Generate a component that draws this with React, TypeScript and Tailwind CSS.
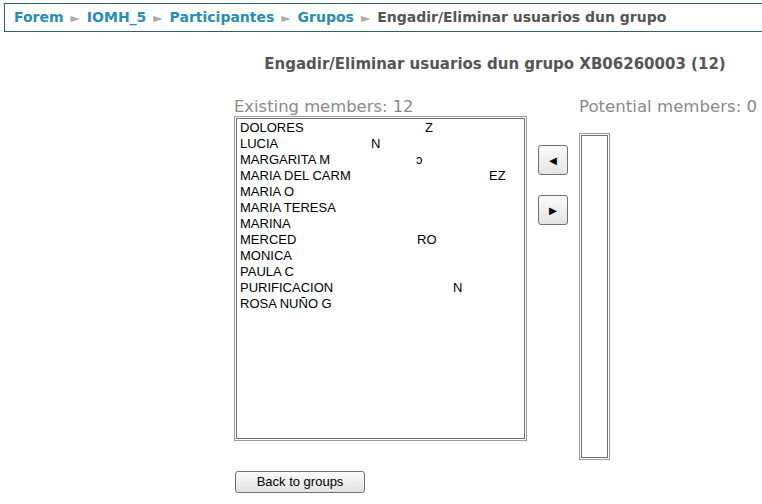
import React from "react";

const members: { name: string; suffix?: string; w?: string }[] = [
  { name: "DOLORES", suffix: "Z", w: "w-[185px]" },
  { name: "LUCIA", suffix: "N", w: "w-[131px]" },
  { name: "MARGARITA M", suffix: "ↄ", w: "w-[176px]" },
  { name: "MARIA DEL CARM", suffix: "EZ", w: "w-[249px]" },
  { name: "MARIA O" },
  { name: "MARIA TERESA" },
  { name: "MARINA" },
  { name: "MERCED", suffix: "RO", w: "w-[177px]" },
  { name: "MONICA" },
  { name: "PAULA C" },
  { name: "PURIFICACION", suffix: "N", w: "w-[213px]" },
  { name: "ROSA NUÑO G" },
];

function Crumb({ children }: { children: React.ReactNode }) {
  return <span className="text-[#2a8db3]">{children}</span>;
}

function Sep() {
  return <span className="mx-[7px] text-[12px] text-[#aaaaaa]">►</span>;
}

export default function App() {
  return (
    <div className="w-[762px] h-[504px] overflow-hidden bg-white">
      <div className="w-[990px] pt-[3px]">
        <div
          className="ml-[4px] h-[29px] border border-[#2f5f69] bg-[#fdfffd] pl-[9px] flex items-center font-bold text-[14px]"
          style={{ fontFamily: '"DejaVu Sans", Verdana, sans-serif' }}
        >
          <Crumb>Forem</Crumb>
          <Sep />
          <Crumb>IOMH_5</Crumb>
          <Sep />
          <Crumb>Participantes</Crumb>
          <Sep />
          <Crumb>Grupos</Crumb>
          <Sep />
          <span className="text-[#555555]">Engadir/Eliminar usuarios dun grupo</span>
        </div>

        <h2
          className="mt-[22px] text-center font-bold text-[15px] text-[#555555] leading-[20px]"
          style={{ fontFamily: '"DejaVu Sans", Verdana, sans-serif' }}
        >
          Engadir/Eliminar usuarios dun grupo XB06260003 (12)
        </h2>

        <div className="mt-[23px] pl-[234px] flex">
          <div className="w-[293px]">
            <div
              className="text-[16.4px] leading-[19px] text-[#8a8a8a] whitespace-nowrap"
              style={{ fontFamily: '"DejaVu Sans", Verdana, sans-serif' }}
            >
              Existing members: 12
            </div>
            <div className="h-[325px] border border-[#9a9a9a] p-[1px]">
              <div
                className="h-full border border-[#6e6e6e] pl-[3px] pt-[1px] text-[13px] leading-[16px] text-black"
                style={{ fontFamily: '"Liberation Sans", Arial, sans-serif' }}
              >
                {members.map((m) => (
                  <div key={m.name} className="flex whitespace-nowrap">
                    <span className={m.w ?? ""}>{m.name}</span>
                    {m.suffix && <span>{m.suffix}</span>}
                  </div>
                ))}
              </div>
            </div>
          </div>

          <div className="ml-[11px] w-[41px] pt-[48px] flex flex-col gap-[20px]">
            <button className="w-[30px] h-[30px] rounded-[3px] border border-[#707070] bg-gradient-to-b from-[#fbfbfb] to-[#e4e4e4] flex items-center justify-center text-[13px] leading-none text-black">
              ◄
            </button>
            <button className="w-[30px] h-[30px] rounded-[3px] border border-[#707070] bg-gradient-to-b from-[#fbfbfb] to-[#e4e4e4] flex items-center justify-center text-[13px] leading-none text-black">
              ►
            </button>
          </div>

          <div>
            <div
              className="text-[16.6px] leading-[19px] text-[#8a8a8a] whitespace-nowrap"
              style={{ fontFamily: '"DejaVu Sans", Verdana, sans-serif' }}
            >
              Potential members: 0
            </div>
            <div className="mt-[17px] w-[31px] h-[327px] border border-[#9a9a9a] p-[1px]">
              <div className="h-full border border-[#6e6e6e]" />
            </div>
          </div>
        </div>

        <div className="mt-[8px] pl-[235px]">
          <button
            className="w-[130px] h-[22px] rounded-[3px] border border-[#707070] bg-gradient-to-b from-[#fbfbfb] to-[#e2e2e2] text-[13px] leading-[20px] text-black"
            style={{ fontFamily: '"Liberation Sans", Arial, sans-serif' }}
          >
            Back to groups
          </button>
        </div>
      </div>
    </div>
  );
}
